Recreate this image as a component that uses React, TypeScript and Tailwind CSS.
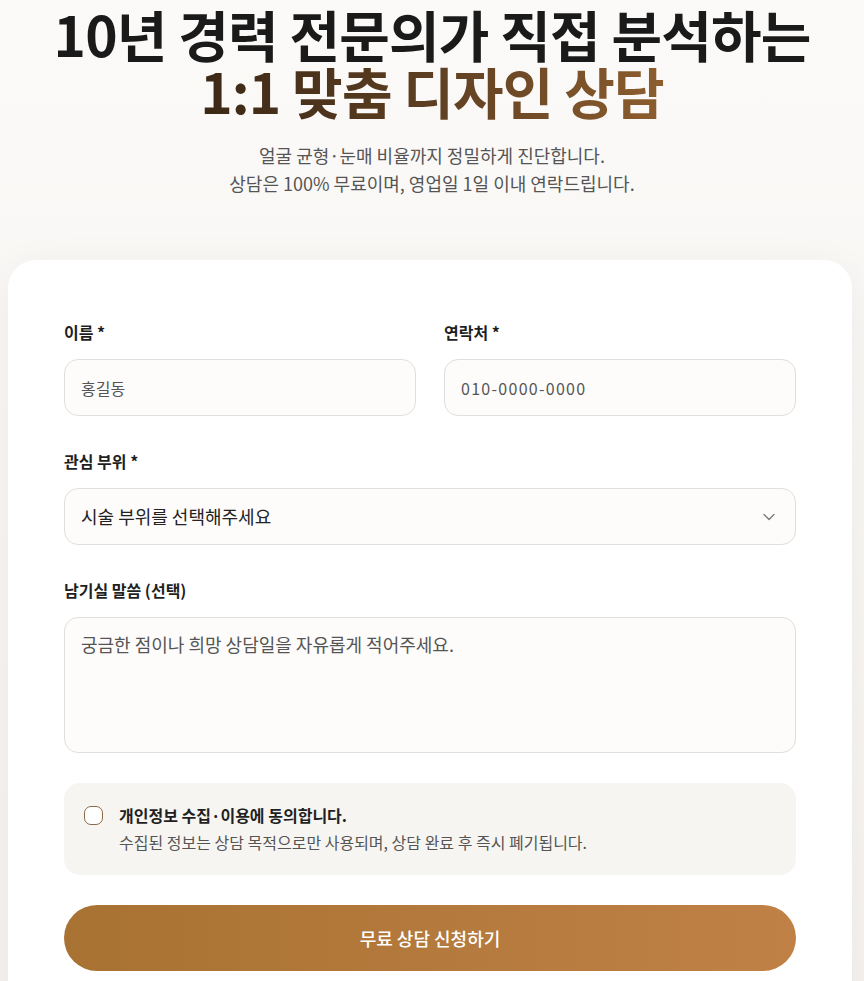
import React, { useState } from 'react';
import { ChevronDown } from 'lucide-react';

const font = { fontFamily: '"Noto Sans CJK KR", "Noto Sans", sans-serif' };

const Label: React.FC<{ children: React.ReactNode }> = ({ children }) => (
  <label className="block text-[16px] leading-5 font-bold text-[#1f1f1f] mb-[17px]">{children}</label>
);

const App: React.FC = () => {
  const [agree, setAgree] = useState(false);

  return (
    <div style={font} className="min-h-screen bg-gradient-to-b from-[#fbfaf8] to-[#f4f2ef] overflow-hidden">
      {/* 헤더 */}
      <section className="pt-[5px] text-center">
        <h1 className="text-[55px] leading-[57px] font-bold tracking-[-0.015em] text-[#1a1a1a]">
          10년 경력 전문의가 직접 분석하는
          <br />
          <span className="bg-gradient-to-r from-[#3b2816] via-[#5e3f22] to-[#8d5d2e] bg-clip-text text-transparent">
            1:1 맞춤 디자인 상담
          </span>
        </h1>
        <p className="mt-[22px] text-[18px] leading-7 text-[#555]">
          얼굴 균형·눈매 비율까지 정밀하게 진단합니다.
          <br />
          상담은 100% 무료이며, 영업일 1일 이내 연락드립니다.
        </p>
      </section>

      {/* 상담 폼 카드 */}
      <div className="ml-2 mr-3 mt-[63px] rounded-[28px] bg-white px-14 pt-[62px] pb-14 shadow-[0_8px_40px_rgba(60,40,20,0.06)]">
        <div className="grid grid-cols-2 gap-7">
          <div>
            <Label>이름 *</Label>
            <input
              placeholder="홍길동"
              className="w-full h-[57px] rounded-[14px] border border-[#e2dedb] bg-[#fdfcfb] px-4 text-[16px] text-[#222] placeholder:text-[#555] outline-none"
            />
          </div>
          <div>
            <Label>연락처 *</Label>
            <input
              placeholder="010-0000-0000"
              className="w-full h-[57px] rounded-[14px] border border-[#e2dedb] bg-[#fdfcfb] px-4 text-[16px] tracking-[0.08em] text-[#222] placeholder:text-[#555] outline-none"
            />
          </div>
        </div>

        <div className="mt-[35px]">
          <Label>관심 부위 *</Label>
          <div className="flex h-[57px] items-center justify-between rounded-[14px] border border-[#e2dedb] bg-[#fdfcfb] pl-4 pr-4">
            <span className="text-[18px] text-[#222]">시술 부위를 선택해주세요</span>
            <ChevronDown className="h-5 w-5 text-[#777]" strokeWidth={1.5} />
          </div>
        </div>

        <div className="mt-[35px]">
          <Label>남기실 말씀 (선택)</Label>
          <textarea
            placeholder="궁금한 점이나 희망 상담일을 자유롭게 적어주세요."
            className="block w-full h-[136px] resize-none rounded-[14px] border border-[#e2dedb] bg-[#fdfcfb] px-4 pt-3 text-[18px] leading-7 text-[#222] placeholder:text-[#555] outline-none"
          />
        </div>

        {/* 개인정보 동의 */}
        <div className="mt-[30px] flex gap-4 rounded-[16px] bg-[#f7f5f2] px-5 pt-[22px] pb-[23px]">
          <button
            type="button"
            onClick={() => setAgree(!agree)}
            className={`mt-[1px] h-[19px] w-[19px] shrink-0 rounded-[7px] border-[1.5px] border-[#8b6a4a] ${agree ? 'bg-[#a87332]' : 'bg-white'}`}
          />
          <div>
            <p className="text-[16px] leading-5 font-bold text-[#1f1f1f]">개인정보 수집·이용에 동의합니다.</p>
            <p className="mt-[7px] text-[16px] leading-5 text-[#555]">
              수집된 정보는 상담 목적으로만 사용되며, 상담 완료 후 즉시 폐기됩니다.
            </p>
          </div>
        </div>

        <button
          type="button"
          className="mt-[30px] h-[66px] w-full rounded-full bg-gradient-to-r from-[#a87232] to-[#c08146] text-[18px] font-medium text-white"
        >
          무료 상담 신청하기
        </button>
      </div>
    </div>
  );
};

export default App;
